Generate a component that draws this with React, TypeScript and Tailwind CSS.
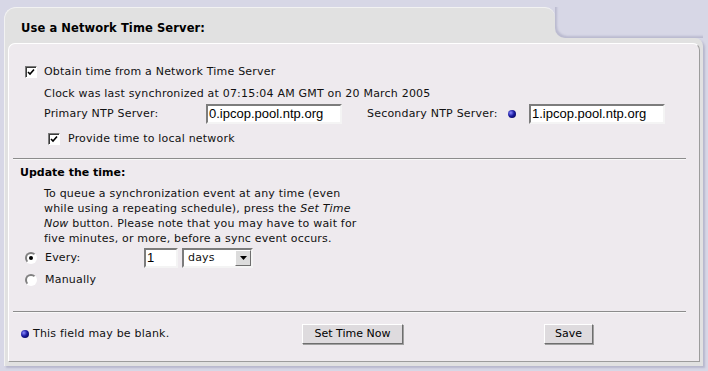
import React from "react";

function Check() {
  return (
    <span className="inline-flex h-[12px] w-[12px] shrink-0 items-center justify-center border border-t-[#7a7a7a] border-l-[#7a7a7a] border-b-white border-r-white bg-white shadow-[inset_1px_1px_0_#3a3a3a]">
      <svg width="8" height="8" viewBox="0 0 8 8">
        <path d="M1 4 L3 6 L7 1.5" fill="none" stroke="#000" strokeWidth="1.6" />
      </svg>
    </span>
  );
}

function Radio({ checked }: { checked?: boolean }) {
  return (
    <span className="inline-flex h-[12px] w-[12px] shrink-0 items-center justify-center rounded-full border-2 border-t-[#808080] border-l-[#808080] border-b-white border-r-white bg-white">
      {checked && <span className="h-[4px] w-[4px] rounded-full bg-black" />}
    </span>
  );
}

function Bullet() {
  return (
    <span className="inline-block h-[8px] w-[8px] shrink-0 rounded-full bg-[radial-gradient(circle_at_35%_35%,#8a8aff_0%,#1a1aa0_45%,#00003a_100%)]" />
  );
}

function TextBox({ value, w }: { value: string; w: string }) {
  return (
    <div
      className={`flex h-[20px] items-center border-2 border-t-[#7c7c7c] border-l-[#7c7c7c] border-b-[#f4f4f4] border-r-[#f4f4f4] bg-white pl-[1px] font-['Liberation_Sans',Arial,sans-serif] text-[13px] tracking-normal text-black ${w}`}
    >
      {value}
    </div>
  );
}

function Button({ label, w }: { label: string; w: string }) {
  return (
    <div
      className={`flex h-[20px] items-center justify-center border border-t-white border-l-white border-b-[#6e6e6e] border-r-[#6e6e6e] bg-[#dedbde] shadow-[1px_1px_0_#a0a0a0] text-[11px] tracking-normal text-black ${w}`}
    >
      {label}
    </div>
  );
}

export default function App() {
  return (
    <div className="h-[371px] w-[708px] overflow-hidden bg-[#d7d7e6] pl-[4px] pt-[7px] font-['DejaVu_Sans',Verdana,sans-serif] text-[11px] tracking-[0.2px] text-[#111]">
      <div className="flex w-[699px] flex-col">
        {/* tab row */}
        <div className="flex h-[31px]">
          <div className="w-[551px] rounded-tl-[12px] rounded-tr-[10px] border-l border-t border-l-[#f2f2f2] border-t-[#f2f2f2] bg-[#e1e1e1] pl-[16px] pt-[13px] text-[11.5px] font-bold leading-[14px] tracking-[0.1px] text-black">
            Use a Network Time Server:
          </div>
          <div className="flex-1 bg-[#e1e1e1]">
            <div className="h-full w-full rounded-bl-[10px] bg-[#d7d7e6] shadow-[inset_2px_-2px_2px_rgba(60,60,110,0.18)]" />
          </div>
        </div>
        {/* body */}
        <div className="h-[328px] rounded-tr-[8px] border-l border-l-[#f2f2f2] bg-[#e1e1e1] pl-[3px] pr-[3px] pt-[5px] shadow-[2px_2px_2px_rgba(60,60,110,0.2)]">
          <div className="flex h-[319px] flex-col rounded-t-[7px] border border-t-white border-l-white border-b-[#9c9c9c] border-r-[#9c9c9c] bg-[#eeeaee]">
            {/* row 1 */}
            <div className="mt-[18px] flex h-[20px] items-center pl-[16px]">
              <Check />
              <span className="ml-[7px]">Obtain time from a Network Time Server</span>
            </div>
            {/* row 2 */}
            <div className="mt-[2px] flex h-[20px] items-center pl-[35px]">
              Clock was last synchronized at 07:15:04 AM GMT on 20 March 2005
            </div>
            {/* row 3 */}
            <div className="flex h-[20px] items-center pl-[35px]">
              <span className="w-[162px]">Primary NTP Server:</span>
              <TextBox value="0.ipcop.pool.ntp.org" w="w-[136px]" />
              <span className="ml-[25px] w-[141px]">Secondary NTP Server:</span>
              <Bullet />
              <span className="w-[13px]" />
              <TextBox value="1.ipcop.pool.ntp.org" w="w-[136px]" />
            </div>
            {/* row 4 */}
            <div className="mt-[5px] flex h-[20px] items-center pl-[39px]">
              <Check />
              <span className="ml-[8px]">Provide time to local network</span>
            </div>
            {/* hr */}
            <div className="ml-[4px] mt-[9px] h-px w-[673px] bg-[#8c8c8c]" />
            <div className="ml-[4px] h-px w-[673px] bg-[#f8f8f8]" />
            {/* heading */}
            <div className="ml-[11px] mt-[5px] h-[16px] font-bold leading-[16px] tracking-normal text-black">
              Update the time:
            </div>
            <p className="ml-[35px] mt-[5px] w-[318px] leading-[15px]">
              To queue a synchronization event at any time (even while using a repeating schedule), press the <i>Set Time Now</i> button. Please note that you may have to wait for five minutes, or more, before a sync event occurs.
            </p>
            {/* every */}
            <div className="mt-[2px] flex h-[20px] items-center pl-[16px]">
              <Radio checked />
              <span className="ml-[8px] w-[99px]">Every:</span>
              <TextBox value="1" w="w-[34px]" />
              <div className="ml-[4px] flex h-[20px] w-[71px] items-center border-2 border-t-[#7c7c7c] border-l-[#7c7c7c] border-b-[#f4f4f4] border-r-[#f4f4f4] bg-white">
                <span className="flex-1 pl-[4px]">days</span>
                <span className="flex h-[16px] w-[16px] items-center justify-center border border-t-white border-l-white border-b-[#6e6e6e] border-r-[#6e6e6e] bg-[#dcdcdc]">
                  <svg width="7" height="4" viewBox="0 0 7 4">
                    <path d="M0 0 H7 L3.5 4 Z" fill="#000" />
                  </svg>
                </span>
              </div>
            </div>
            {/* manually */}
            <div className="mt-[2px] flex h-[20px] items-center pl-[16px]">
              <Radio />
              <span className="ml-[8px]">Manually</span>
            </div>
            {/* hr */}
            <div className="ml-[4px] mt-[21px] h-px w-[673px] bg-[#8c8c8c]" />
            <div className="ml-[4px] h-px w-[673px] bg-[#f8f8f8]" />
            {/* footer */}
            <div className="mt-[11px] flex h-[20px] items-center">
              <div className="flex w-[293px] items-center pl-[12px]">
                <Bullet />
                <span className="ml-[4px]">This field may be blank.</span>
              </div>
              <Button label="Set Time Now" w="w-[101px]" />
              <span className="w-[141px]" />
              <Button label="Save" w="w-[49px]" />
            </div>
          </div>
        </div>
      </div>
    </div>
  );
}
